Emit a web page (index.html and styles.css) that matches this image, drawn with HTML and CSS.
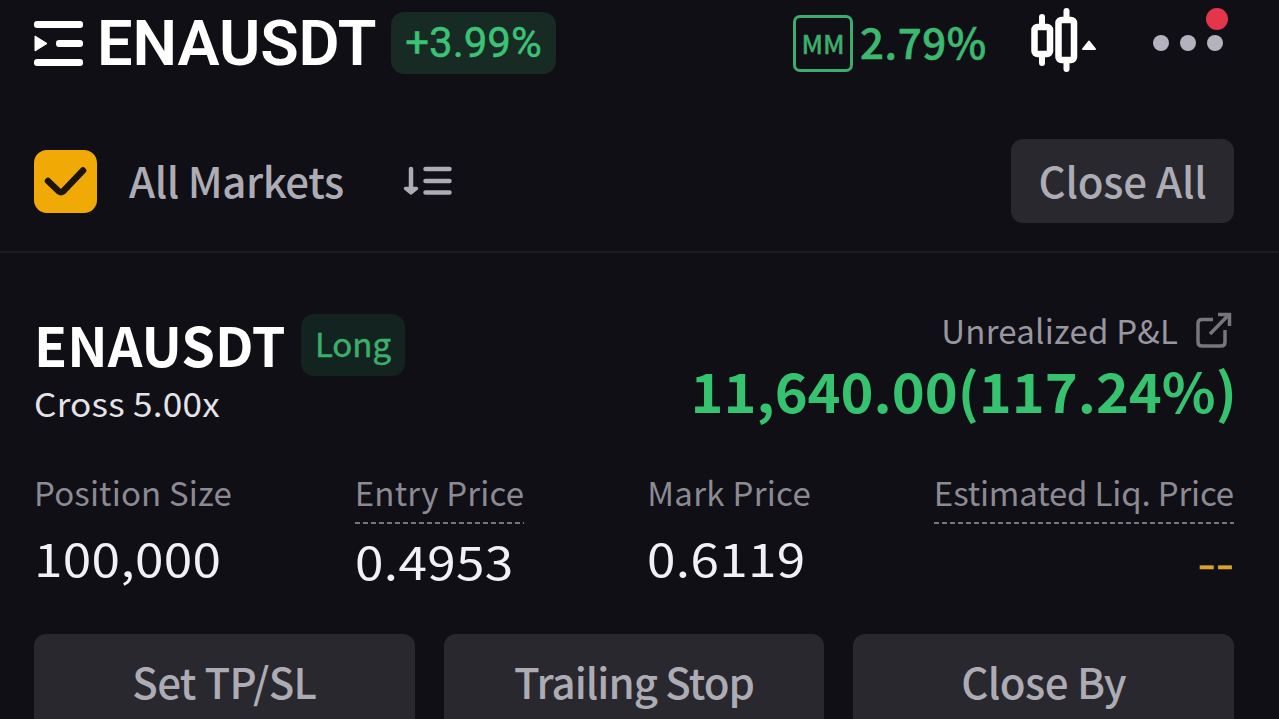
FILE: index.html
```html
<!DOCTYPE html>
<html lang="en">
<head>
    <meta charset="UTF-8">
    <meta name="viewport" content="width=device-width, initial-scale=1.0">
    <title>ENAUSDT - Positions</title>
    <link rel="stylesheet" href="styles.css">
</head>
<body>
    <!-- Top bar -->
    <header class="topbar">
        <svg class="menu-icon" width="50" height="48" viewBox="0 0 50 48" fill="#fff">
            <rect x="0" y="2" width="49" height="7" rx="3"/>
            <rect x="22" y="21" width="27" height="7" rx="3"/>
            <rect x="0" y="40" width="49" height="7" rx="3"/>
            <path d="M1 17 L13 24.500 L1 32 Z" stroke="#fff" stroke-linejoin="round"/>
        </svg>
        <h1 class="symbol">ENAUSDT</h1>
        <div class="change">+3.99%</div>
        <div class="margin-badge">MM</div>
        <div class="margin-rate">2.79%</div>
        <svg class="chart-icon" width="68" height="86" viewBox="0 0 68 86" fill="none" stroke="#fff">
            <path d="M13 17 V25 M13 56 V63 M37.500 11 V18 M37.500 62 V69" stroke-width="6" stroke-linecap="round"/>
            <rect x="5.500" y="27" width="15.500" height="27" rx="3" stroke-width="6.500"/>
            <rect x="29.500" y="20" width="15.500" height="40" rx="3" stroke-width="6.500"/>
            <path d="M54 49 L60 41.500 L66 49 Z" fill="#fff" stroke-width="2" stroke-linejoin="round"/>
        </svg>
        <div class="more">
            <i class="dot"></i>
            <i class="dot"></i>
            <i class="dot"></i>
            <i class="notice"></i>
        </div>
    </header>

    <!-- Filter row -->
    <div class="filter">
        <div class="checkbox">
            <svg width="64" height="64" viewBox="0 0 64 64" fill="none" stroke="#1b150c" stroke-width="6.500" stroke-linecap="round" stroke-linejoin="round">
                <path d="M14 31 L25 41.500 Q27 43 29 41.500 L49 20.500"/>
            </svg>
        </div>
        <div class="markets">All Markets</div>
        <svg class="sort-icon" width="50" height="32" viewBox="0 0 50 32" fill="none" stroke="#adabb3" stroke-width="4.500" stroke-linecap="round">
            <path d="M8 4 V24 M22.500 4 H46.500 M22.500 16 H46.500 M22.500 27.500 H46.500"/>
            <path d="M2.500 23.500 H13.500 L8 28 Z" fill="#adabb3" stroke-width="3.500" stroke-linejoin="round"/>
        </svg>
        <button class="close-all">Close All</button>
    </div>

    <!-- Open position -->
    <main class="position">
        <div class="summary">
            <div class="contract">
                <div class="name-row">
                    <h2 class="name">ENAUSDT</h2>
                    <div class="side">Long</div>
                </div>
                <div class="leverage">Cross 5.00x</div>
            </div>
            <div class="pnl">
                <div class="pnl-label">
                    Unrealized P&amp;L
                    <svg width="36" height="36" viewBox="0 0 36 36" fill="none" stroke="#77767c" stroke-width="3.500">
                        <path d="M17 7.500 H6 Q2 7.500 2 11.500 V30 Q2 34 6 34 H25 Q29 34 29 30 V18"/>
                        <path d="M14 22 L33 2.500 M22 2.500 H33.500 V14"/>
                    </svg>
                </div>
                <div class="pnl-value">11,640.00(117.24%)</div>
            </div>
        </div>

        <div class="stats">
            <div class="stat">
                <div class="label size-label">Position Size</div>
                <div class="value">100,000</div>
            </div>
            <div class="stat">
                <div class="label hint entry-label">Entry Price</div>
                <div class="value lower">0.4953</div>
            </div>
            <div class="stat">
                <div class="label mark-label">Mark Price</div>
                <div class="value">0.6119</div>
            </div>
            <div class="stat">
                <div class="label hint liq-label">Estimated Liq. Price</div>
                <div class="value lower liq">--</div>
            </div>
        </div>

        <div class="actions">
            <button class="action tpsl">Set TP/SL</button>
            <button class="action trailing">Trailing Stop</button>
            <button class="action">Close By</button>
        </div>
    </main>
</body>
</html>
```
FILE: styles.css
```css
* {
    box-sizing: border-box;
}
body {
    margin: 0;
    height: 719px;
    overflow: hidden;
    background-color: #100f16;
    color: #fff;
    font-family: "Noto Sans CJK SC", "Noto Sans", sans-serif;
}
h1, h2 {
    margin: 0;
    font-weight: 500;
}
button {
    padding: 0;
    border: none;
    background-color: #29282e;
    color: #adabb3;
    font-family: inherit;
    font-size: 42px;
    font-weight: 500;
    cursor: pointer;
}
svg {
    display: block;
    flex: none;
}

/* Top bar */
.topbar {
    display: flex;
    align-items: center;
    height: 86px;
    padding-left: 34px;
    white-space: nowrap;
}
.symbol {
    margin-left: 13px;
    width: 294px;
    font-family: Roboto, sans-serif;
    font-size: 63px;
    font-weight: 600;
    letter-spacing: -0.1px;
    line-height: 86px;
    padding-top: 2px;
}
.change {
    width: 165px;
    height: 62px;
    border-radius: 13px;
    background-color: #172a23;
    color: #3cc274;
    font-family: Roboto, sans-serif;
    font-size: 42px;
    line-height: 62px;
    text-align: center;
    -webkit-text-stroke: 0.5px;
}
.margin-badge {
    width: 60px;
    height: 57px;
    margin-left: 237px;
    border: 3px solid #3cae6b;
    border-radius: 7px;
    color: #3cae6b;
    font-size: 26px;
    font-weight: 500;
    line-height: 50px;
    text-align: center;
    -webkit-text-stroke: 0.3px;
}
.margin-rate {
    width: 126px;
    margin: 0 43px 4px 7px;
    color: #3cb96f;
    font-size: 42px;
    font-weight: 500;
    letter-spacing: 0.6px;
    line-height: 78px;
    -webkit-text-stroke: 0.6px;
}
.more {
    position: relative;
    display: flex;
    gap: 11px;
    margin-left: 56px;
}
.dot {
    width: 16px;
    height: 16px;
    border-radius: 50%;
    background-color: #b4b2bc;
}
.notice {
    position: absolute;
    right: -5px;
    top: -27px;
    width: 22px;
    height: 22px;
    border-radius: 50%;
    background-color: #e5354b;
}

/* Filter row */
.filter {
    display: flex;
    align-items: center;
    height: 167px;
    padding: 25px 45px 0 34px;
    border-bottom: 2px solid #1d1c22;
    color: #adabb3;
    white-space: nowrap;
}
.checkbox {
    width: 63px;
    height: 63px;
    border-radius: 13px;
    background-color: #f1aa05;
}
.markets {
    width: 214px;
    margin-left: 32px;
    padding-bottom: 3px;
    font-size: 42px;
    font-weight: 500;
    letter-spacing: -0.45px;
    line-height: 78px;
}
.sort-icon {
    margin-left: 60px;
}
.close-all {
    width: 223px;
    height: 84px;
    margin-left: auto;
    padding-bottom: 4px;
    border-radius: 12px;
    letter-spacing: -0.2px;
}

/* Open position */
.position {
    padding: 61px 45px 0 34px;
    white-space: nowrap;
}
.summary {
    display: flex;
    justify-content: space-between;
    height: 160px;
}
.name-row {
    display: flex;
}
.name {
    width: 267px;
    font-size: 54px;
    font-weight: 700;
    line-height: 60px;
}
.side {
    width: 104px;
    height: 62px;
    border-radius: 13px;
    background-color: #13231f;
    color: #3cae6b;
    font-size: 33px;
    line-height: 58px;
    text-align: center;
    -webkit-text-stroke: 0.5px;
}
.leverage {
    color: #e4e3e8;
    font-size: 33px;
    letter-spacing: 0.2px;
    line-height: 54px;
    transform: scaleX(1.065);
    transform-origin: left;
}
.pnl {
    margin-top: -2px;
    text-align: right;
}
.pnl-label {
    display: flex;
    justify-content: flex-end;
    align-items: center;
    gap: 18px;
    padding-right: 2px;
    color: #98969e;
    font-size: 33px;
    letter-spacing: 0.2px;
    line-height: 34px;
}
.pnl-value {
    margin-right: -3px;
    color: #36c36f;
    font-size: 54px;
    font-weight: 700;
    line-height: 84px;
    transform: scaleX(1.035);
    transform-origin: right;
}
.stats {
    display: flex;
    justify-content: space-between;
    height: 160px;
}
.label {
    height: 50px;
    color: #8c8a92;
    font-size: 33px;
    line-height: 36px;
}
.size-label {
    letter-spacing: 0.15px;
}
.entry-label {
    letter-spacing: 0.2px;
}
.mark-label {
    letter-spacing: 0.3px;
}
.liq-label {
    letter-spacing: -0.17px;
}
/* dashed underline on labels that open a tooltip */
.hint {
    background: repeating-linear-gradient(90deg, #77767c 0 5px, transparent 5px 8px) left 0 bottom 0 / 100% 2px no-repeat;
}
/* figures are set slightly extended */
.value {
    color: #f1f0f4;
    font-size: 46px;
    letter-spacing: 0.3px;
    line-height: 66px;
    transform: scaleX(1.115);
    transform-origin: left;
}
.lower {
    line-height: 72px;
}
.liq {
    color: #dda32c;
    text-align: right;
    transform-origin: right;
    -webkit-text-stroke: 0.7px;
}
.actions {
    display: grid;
    grid-template-columns: repeat(3, 1fr);
    gap: 29px;
}
.action {
    height: 100px;
    padding-bottom: 7px;
    border-radius: 12px;
    letter-spacing: -0.5px;
}
.tpsl {
    letter-spacing: -0.65px;
}
.trailing {
    letter-spacing: -1px;
}
```
